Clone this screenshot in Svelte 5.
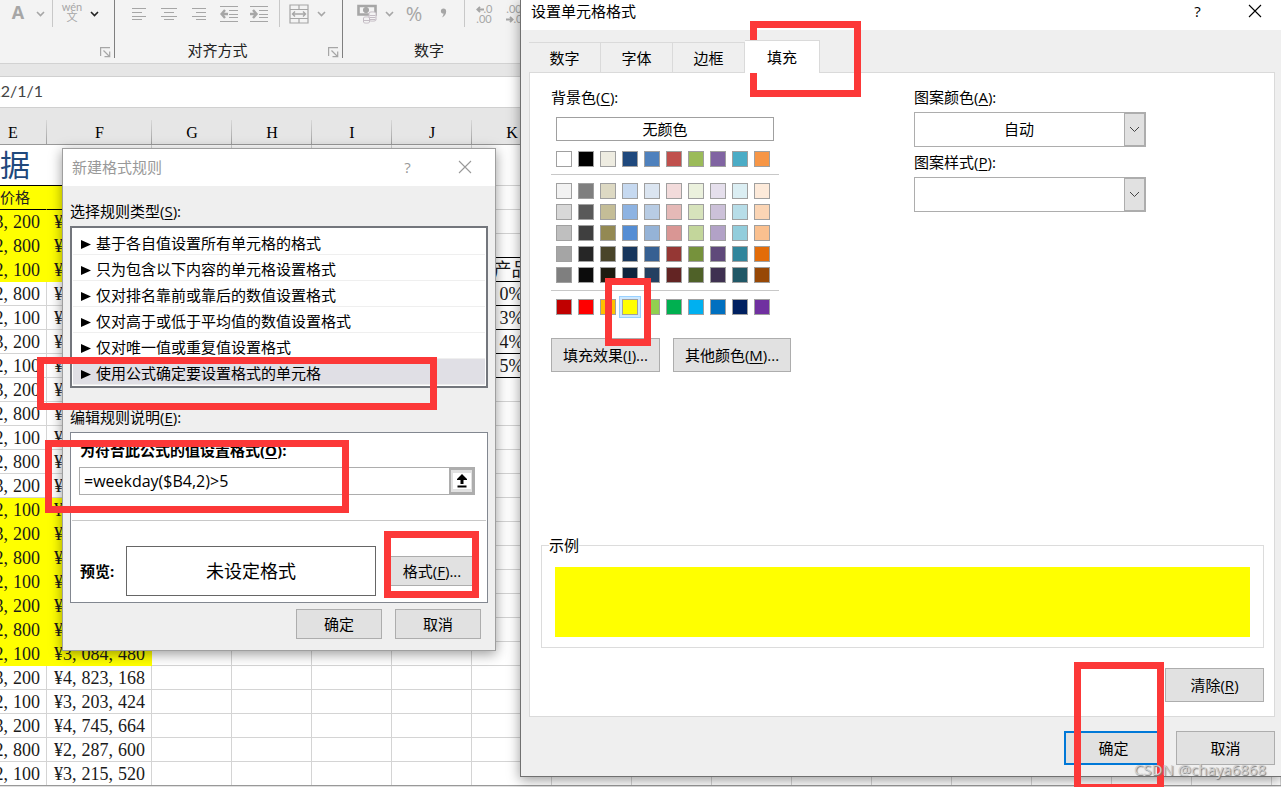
<script lang="ts">
	const columns = ['E', 'F', 'G', 'H', 'I', 'J', 'K', 'L', 'M', 'N', 'O', 'P', 'Q', 'R', 'S', 'T', 'U'];
	const restColumns = columns.slice(2);

	const prices = [
		'3,200', '2,800', '2,100', '2,800', '2,100', '3,200', '2,100', '3,200',
		'2,800', '2,100', '2,800', '3,200', '2,100', '3,200', '2,800', '2,100',
		'3,200', '2,800', '2,100', '3,200', '2,100', '3,200', '2,800', '2,100'
	];
	const totals: Record<number, string> = {
		18: '3,084,480',
		19: '4,823,168',
		20: '3,203,424',
		21: '4,745,664',
		22: '2,287,600',
		23: '3,215,520'
	};
	const discounts: Record<number, string> = { 2: '产品', 3: '0%', 4: '3%', 5: '4%', 6: '5%' };

	const rows = prices.map((price, i) => ({
		price,
		total: '¥' + (totals[i] ?? ''),
		weekend: i < 3 || (i >= 12 && i <= 18),
		discount: discounts[i] ?? ''
	}));

	// keeps the comma with the digits before it
	const groups = (value: string) => value.split(/(?<=,)/);

	const ruleTypes = [
		'基于各自值设置所有单元格的格式',
		'只为包含以下内容的单元格设置格式',
		'仅对排名靠前或靠后的数值设置格式',
		'仅对高于或低于平均值的数值设置格式',
		'仅对唯一值或重复值设置格式',
		'使用公式确定要设置格式的单元格'
	];
	let selectedRule = $state(5);
	let formula = $state('=weekday($B4,2)>5');

	const tabs = ['数字', '字体', '边框', '填充'];
	let activeTab = $state('填充');

	const themeColors = ['#ffffff', '#000000', '#eeece1', '#1f497d', '#4f81bd', '#c0504d', '#9bbb59', '#8064a2', '#4bacc6', '#f79646'];
	const tints = [
		'#f2f2f2', '#7f7f7f', '#ddd9c3', '#c6d9f0', '#dbe5f1', '#f2dbdb', '#ebf1dd', '#e5dfec', '#dbeef3', '#fdeada',
		'#d8d8d8', '#595959', '#c4bd97', '#8db3e2', '#b8cce4', '#e5b9b7', '#d7e3bc', '#ccc1d9', '#b7dde8', '#fbd5b5',
		'#bfbfbf', '#3f3f3f', '#938953', '#548dd4', '#95b3d7', '#d99694', '#c3d69b', '#b2a2c7', '#92cddc', '#fac08f',
		'#a5a5a5', '#262626', '#494429', '#17365d', '#366092', '#953734', '#76923c', '#5f497a', '#31859b', '#e36c09',
		'#7f7f7f', '#0c0c0c', '#1d1b10', '#0f243e', '#244061', '#632423', '#4f6128', '#3f3151', '#205867', '#974806'
	];
	const standardColors = ['#c00000', '#ff0000', '#ffc000', '#ffff00', '#92d050', '#00b050', '#00b0f0', '#0070c0', '#002060', '#7030a0'];
	let fill = $state('#ffff00');
</script>

{#snippet chevron()}
	<svg width="9" height="6" viewBox="0 0 9 6" fill="none" stroke="currentColor" stroke-width="1.6">
		<path d="M1 1l3.5 3.5L8 1" />
	</svg>
{/snippet}

{#snippet launcher()}
	<button class="launcher" aria-label="更多选项">
		<svg width="11" height="11" viewBox="0 0 11 11" fill="none" stroke="#a6a6a6" stroke-width="1.2">
			<path d="M.6 9V.6H10M3.500 3.500l6 6M9.700 4.500v5.200H4.500" />
		</svg>
	</button>
{/snippet}

{#snippet closeIcon()}
	<svg width="14" height="14" viewBox="0 0 14 14" fill="none" stroke="currentColor" stroke-width="1.1">
		<path d="M1 1l12 12M13 1L1 13" />
	</svg>
{/snippet}

{#snippet swatches(colors: string[])}
	<div class="swatches">
		{#each colors as color}
			<button
				class="swatch"
				class:selected={color === fill}
				style:background-color={color}
				aria-label={color}
				onclick={() => (fill = color)}
			></button>
		{/each}
	</div>
{/snippet}

<div class="desktop">
	<main class="workbook">
		<div class="ribbon">
			<section class="group font-group">
				<div class="tools">
					<button class="tool letter">A</button>
					<button class="more" aria-label="字体颜色">{@render chevron()}</button>
					<span class="separator"></span>
					<button class="tool phonetic"><span>wén</span><span>文</span></button>
					<button class="more enabled" aria-label="拼音">{@render chevron()}</button>
				</div>
				<div class="caption">{@render launcher()}</div>
			</section>

			<section class="group align-group">
				<div class="tools">
					<button class="tool" aria-label="左对齐">
						<svg width="16" height="12" viewBox="0 0 16 12" stroke="currentColor"><path d="M1 .5h14M1 4.500h10M1 8.500h14M1 11.500h10" /></svg>
					</button>
					<button class="tool" aria-label="居中">
						<svg width="16" height="12" viewBox="0 0 16 12" stroke="currentColor"><path d="M0 .5h16M3 4.500h10M0 8.500h16M3 11.500h10" /></svg>
					</button>
					<button class="tool" aria-label="右对齐">
						<svg width="16" height="12" viewBox="0 0 16 12" stroke="currentColor"><path d="M1 .5h14M5 4.500h10M1 8.500h14M5 11.500h10" /></svg>
					</button>
					<button class="tool" aria-label="减少缩进量">
						<svg width="18" height="16" viewBox="0 0 18 16" fill="none" stroke="currentColor">
							<path d="M0 .5h18M9 4.500h9M9 8.500h9M9 11.500h9M0 15.500h18" />
							<path d="M8 8H1.500M5 4L1.500 8 5 12" stroke-width="2.400" />
						</svg>
					</button>
					<button class="tool" aria-label="增加缩进量">
						<svg width="18" height="16" viewBox="0 0 18 16" fill="none" stroke="currentColor">
							<path d="M0 .5h18M9 4.500h9M9 8.500h9M9 11.500h9M0 15.500h18" />
							<path d="M0 8h6.500M3 4l3.500 4L3 12" stroke-width="2.400" />
						</svg>
					</button>
					<span class="separator"></span>
					<button class="tool" aria-label="合并后居中">
						<svg width="20" height="20" viewBox="0 0 20 20" fill="none" stroke="currentColor" stroke-width="1.2">
							<path d="M1 1h18v18H1zM1 5.500h18M1 14.500h18M10 1v4.500M10 14.500V19" />
							<path d="M3.500 10h13M6 7.500L3.500 10 6 12.500M14 7.500l2.500 2.500-2.500 2.500" stroke-width="1.4" />
						</svg>
					</button>
					<button class="more" aria-label="合并选项">{@render chevron()}</button>
				</div>
				<div class="caption"><span>对齐方式</span>{@render launcher()}</div>
			</section>

			<section class="group number-group">
				<div class="tools">
					<button class="tool" aria-label="会计数字格式">
						<svg width="20" height="20" viewBox="0 0 20 20" fill="none" stroke="currentColor">
							<path d="M1.500 2h17v8.500h-17z" stroke-width="2.600" />
							<circle cx="9" cy="6" r="2.600" fill="currentColor" />
							<path d="M12 9c0-1.500 7-1.500 7 0v7c0 1.500-7 1.500-7 0z" fill="#f3f3f3" stroke="#c4bcc4" />
							<path d="M12.500 11.500h6M12.500 13.500h6M12.500 15.500h6" stroke="#c4bcc4" />
							<path d="M6.500 14c0-1.500 6-1.500 6 0v4c0 1.500-6 1.500-6 0z" fill="#f3f3f3" stroke="#c4bcc4" />
							<path d="M7 16.500h5" stroke="#c4bcc4" />
						</svg>
					</button>
					<button class="more" aria-label="货币选项">{@render chevron()}</button>
					<button class="tool percent">%</button>
					<button class="tool" aria-label="千位分隔样式">
						<svg width="8" height="11" viewBox="0 0 8 11" fill="currentColor"><circle cx="3.500" cy="3" r="2.600" /><path d="M6.100 3c.2 3-1.500 5.500-4.300 6.500C3 8 3.600 6.500 3.500 5z" /></svg>
					</button>
					<span class="separator"></span>
					<button class="tool decimals">
						<span>
							<svg width="8" height="7" viewBox="0 0 8 7" fill="none" stroke="currentColor" stroke-width="1.8"><path d="M8 3.500H1.500M4 .8L1.300 3.500 4 6.200" /></svg>.0
						</span>
						<span>.00</span>
					</button>
					<button class="tool decimals">
						<span>.00</span>
						<span>
							<svg width="8" height="7" viewBox="0 0 8 7" fill="none" stroke="currentColor" stroke-width="1.8"><path d="M0 3.500h6.500M4 .8l2.700 2.700L4 6.200" /></svg>.0
						</span>
					</button>
				</div>
				<div class="caption"><span>数字</span></div>
			</section>
		</div>

		<div class="formula-bar"><div class="formula-value"><span>2022/1/1</span></div></div>

		<table class="sheet">
			<colgroup>
				<col class="col-price" />
				<col class="col-total" />
				{#each restColumns.slice(1) as _}
					<col class="col-plain" />
				{/each}
				<col />
			</colgroup>
			<thead>
				<tr>
					{#each columns as column}
						<th class:first={column === 'E'}>{column}</th>
					{/each}
				</tr>
			</thead>
			<tbody>
				<tr class="title-row">
					<td colspan="2">据</td>
					{#each restColumns as _}<td></td>{/each}
				</tr>
				<tr class="field-row">
					<td class="filled">价格</td>
					<td class="filled"></td>
					{#each restColumns as _}<td></td>{/each}
				</tr>
				{#each rows as row, i}
					<tr>
						<td class:weekend={row.weekend}>
							<div class="amount">{#each groups(row.price) as part}<span>{part}</span>{/each}</div>
						</td>
						<td class:weekend={row.weekend}>
							<div class="amount" class:start={row.total === '¥'}>{#each groups(row.total) as part}<span>{part}</span>{/each}</div>
						</td>
						{#each restColumns as column}
							{#if column === 'K'}
								<td class="discount" class:boxed={row.discount !== '' || i === 1}>{row.discount}</td>
							{:else}
								<td></td>
							{/if}
						{/each}
					</tr>
				{/each}
			</tbody>
		</table>
	</main>

	<div class="dialog rule-dialog" role="dialog" aria-labelledby="rule-title">
		<header>
			<h2 id="rule-title">新建格式规则</h2>
			<button class="caption-button">?</button>
			<button class="caption-button" aria-label="关闭">{@render closeIcon()}</button>
		</header>
		<div class="rule-body">
			<p class="label" id="rule-types">选择规则类型(<u>S</u>):</p>
			<ul class="rule-list" aria-labelledby="rule-types">
				{#each ruleTypes as rule, i}
					<li>
						<button class:selected={i === selectedRule} onclick={() => (selectedRule = i)}>
							<svg width="10" height="9" viewBox="0 0 10 9"><path d="M0 0l10 4.500L0 9z" /></svg>
							{rule}
						</button>
					</li>
				{/each}
			</ul>

			<p class="label second">编辑规则说明(<u>E</u>):</p>
			<div class="rule-editor">
				<label for="formula">为符合此公式的值设置格式(<u>O</u>):</label>
				<div class="formula-field">
					<input id="formula" type="text" bind:value={formula} />
					<button aria-label="选择区域">
						<svg width="18" height="16" viewBox="0 0 18 16"><path fill="#fff" d="M0 0h18v16H0z" /><path d="M9 1l5 5v1h-3.500v4h-3V7H4V6zM4.500 12.500h9v2h-9z" /></svg>
					</button>
				</div>
				<hr />
				<div class="preview">
					<strong>预览:</strong>
					<div class="preview-box">未设定格式</div>
					<button class="push">格式(<u>F</u>)...</button>
				</div>
			</div>
			<div class="rule-actions">
				<button class="push">确定</button>
				<button class="push">取消</button>
			</div>
		</div>
	</div>

	<div class="dialog cell-dialog" role="dialog" aria-labelledby="cell-title">
		<header>
			<h2 id="cell-title">设置单元格格式</h2>
			<button class="caption-button">?</button>
			<button class="caption-button" aria-label="关闭">{@render closeIcon()}</button>
		</header>
		<div class="cell-body">
			<nav class="tabs">
				{#each tabs as tab}
					<button class:active={tab === activeTab} onclick={() => (activeTab = tab)}>{tab}</button>
				{/each}
			</nav>
			<div class="panel">
				<div class="fill-options">
					<div class="background">
						<p class="label">背景色(<u>C</u>):</p>
						<div class="palette">
							<button class="no-color">无颜色</button>
							{@render swatches(themeColors)}
							<hr />
							{@render swatches(tints)}
							<hr />
							{@render swatches(standardColors)}
						</div>
						<div class="fill-buttons">
							<button class="push">填充效果(<u>I</u>)...</button>
							<button class="push">其他颜色(<u>M</u>)...</button>
						</div>
					</div>
					<div class="pattern">
						<label for="pattern-color">图案颜色(<u>A</u>):</label>
						<div class="select">
							<select id="pattern-color"><option>自动</option></select>
							<span class="arrow">
								<svg width="11" height="7" viewBox="0 0 11 7" fill="none" stroke="#444"><path d="M1 1l4.500 4.500L10 1" /></svg>
							</span>
						</div>
						<label for="pattern-style">图案样式(<u>P</u>):</label>
						<div class="select">
							<select id="pattern-style"><option></option></select>
							<span class="arrow">
								<svg width="11" height="7" viewBox="0 0 11 7" fill="none" stroke="#444"><path d="M1 1l4.500 4.500L10 1" /></svg>
							</span>
						</div>
					</div>
				</div>
				<fieldset>
					<legend>示例</legend>
					<div class="sample" style:background-color={fill}></div>
				</fieldset>
				<div class="clear-row">
					<button class="push">清除(<u>R</u>)</button>
				</div>
			</div>
			<div class="cell-actions">
				<button class="push default">确定</button>
				<button class="push">取消</button>
			</div>
		</div>
	</div>

	<span class="mark mark-rule"></span>
	<span class="mark mark-formula"></span>
	<span class="mark mark-format"></span>
	<span class="mark mark-tab"></span>
	<span class="mark mark-swatch"></span>
	<span class="mark mark-ok"></span>

	<span class="watermark">CSDN @chaya6868</span>
</div>

<style>
	:global(body) {
		margin: 0;
	}

	.desktop {
		--ui: 'Open Sans', 'Noto Sans CJK SC', sans-serif;
		--song: 'Liberation Serif', 'Noto Sans CJK SC', serif;
		position: relative;
		min-height: 100vh;
		overflow: hidden;
		background: #e0e0e0;
		font-family: var(--ui);
		font-size: 15px;
		line-height: 20px;
		color: #000;
	}

	.desktop * {
		box-sizing: border-box;
	}

	button,
	input,
	select {
		font: inherit;
		color: inherit;
		margin: 0;
		padding: 0;
	}

	button {
		background: none;
		border: none;
		white-space: nowrap;
	}

	p,
	h2,
	ul {
		margin: 0;
		padding: 0;
		font-size: inherit;
		font-weight: normal;
	}

	u {
		text-underline-offset: 2px;
	}

	/* ribbon */
	.ribbon {
		display: flex;
		height: 64px;
		background: #f3f3f3;
		border-bottom: 1px solid #d2d2d2;
	}

	.group {
		display: flex;
		flex-direction: column;
		height: 58px;
		border-right: 1px solid #7f7f7f;
	}

	.font-group {
		width: 115px;
	}

	.align-group {
		width: 228px;
	}

	.number-group {
		width: 194px;
		border-right: none;
	}

	.tools {
		display: flex;
		height: 27px;
		padding-left: 9px;
		color: #a6a6a6;
	}

	.font-group .tools {
		padding-left: 3px;
	}

	.tool,
	.more {
		display: flex;
		align-items: center;
		justify-content: center;
		width: 30px;
		flex: none;
	}

	.more {
		width: 14px;
	}

	.more.enabled {
		color: #222;
	}

	.separator {
		width: 1px;
		margin: 0 4px 0 5px;
		background: #c8c8c8;
	}

	.letter {
		font-weight: bold;
		font-size: 18px;
		padding-bottom: 4px;
	}

	.phonetic,
	.decimals {
		flex-direction: column;
		font-family: Lato, 'Noto Sans CJK SC', sans-serif;
		font-size: 11px;
		line-height: 10px;
	}

	.phonetic {
		padding-bottom: 3px;
	}

	.percent {
		font-size: 20px;
		margin-left: 3px;
	}

	.caption {
		flex: 1;
		display: flex;
		align-items: flex-end;
		justify-content: center;
		position: relative;
		padding-right: 22px;
		line-height: 16px;
		color: #222;
	}

	.launcher {
		position: absolute;
		right: 3px;
		bottom: 0;
		line-height: 0;
	}

	/* formula bar */
	.formula-bar {
		padding: 12px 0 0;
		background: #e6e6e6;
	}

	.formula-value {
		display: flex;
		height: 32px;
		align-items: center;
		background: #fff;
		border-top: 1px solid #d0d0d0;
		border-bottom: 1px solid #d0d0d0;
		font-family: Lato, sans-serif;
		font-size: 16px;
		color: #444;
	}

	.formula-value span {
		display: flex;
		justify-content: flex-end;
		width: 43px;
		padding-bottom: 2px;
	}

	/* sheet */
	.sheet {
		width: 100%;
		table-layout: fixed;
		border-spacing: 0;
		background: #fff;
		font-family: var(--song);
		font-size: 18px;
		line-height: 22px;
		border-bottom: 1px solid #999;
	}

	.col-price {
		width: 47px;
	}

	.col-total {
		width: 105px;
	}

	.col-plain {
		width: 80px;
	}

	th {
		height: 36px;
		padding: 14px 0 0;
		font-weight: normal;
		font-size: 16px;
		background: linear-gradient(#d8d8d8, #a0a0a0) right bottom / 1px 24px no-repeat #e6e6e6;
		border-bottom: 1px solid #999;
	}

	th.first {
		padding-right: 21px;
	}

	td {
		height: 24px;
		padding: 1px 0 0;
		border-right: 1px solid #d4d4d4;
		border-bottom: 1px solid #d4d4d4;
		overflow: hidden;
		white-space: nowrap;
		color: #1a1a1a;
	}

	tbody tr:last-child td {
		height: 23px;
		border-bottom: none;
	}

	td.weekend,
	td.filled {
		background: #ff0;
		border-color: #ff0;
	}

	.title-row td {
		height: 41px;
		font-size: 30px;
		line-height: 36px;
		color: #1f497d;
	}

	.title-row td:first-child,
	.field-row td.filled {
		border-bottom-color: #000;
	}

	.field-row td {
		font-size: 15px;
		color: #222;
	}

	.amount {
		display: flex;
		justify-content: flex-end;
		gap: 5px;
		padding-right: 6px;
	}

	.amount.start {
		justify-content: flex-start;
		padding-left: 7px;
	}

	.discount {
		text-align: center;
	}

	.discount.boxed {
		border-bottom-color: #000;
	}

	/* dialogs */
	.dialog {
		position: absolute;
		background: #efefef;
		border: 1px solid #9f9f9f;
		box-shadow: 0 3px 12px rgba(0, 0, 0, 0.4);
	}

	.dialog header {
		display: flex;
		align-items: center;
		gap: 4px;
		background: #fff;
	}

	.dialog h2 {
		flex: 1;
	}

	.caption-button {
		display: flex;
		align-items: center;
		justify-content: center;
		width: 53px;
		height: 22px;
	}

	.push {
		height: 30px;
		padding-bottom: 1px;
		background: #e1e1e1;
		border: 1px solid #adadad;
	}

	.label,
	label {
		display: block;
	}

	hr {
		height: 1px;
		margin: 0;
		border: none;
		background: #c8c8c8;
	}

	.rule-dialog {
		left: 62px;
		top: 148px;
		width: 434px;
	}

	.rule-dialog header {
		height: 37px;
		padding: 0 4px 2px 9px;
		color: #999;
	}

	.rule-body {
		padding: 15px 7px 11px;
	}

	.label.second {
		margin-top: 19px;
	}

	.rule-list {
		margin-top: 5px;
		padding: 1px;
		list-style: none;
		background: #fff;
		border: 2px solid #73767c;
	}

	.rule-list button {
		display: flex;
		align-items: center;
		gap: 5px;
		width: 100%;
		height: 26px;
		padding: 2px 8px 0;
		border-bottom: 1px solid #efefef;
	}

	.rule-list svg {
		margin-top: 3px;
	}

	.rule-list button.selected {
		background: #e0dfe5;
	}

	.rule-editor {
		margin-top: 5px;
		padding: 7px 1px 6px;
		background: #fff;
		border: 1px solid #828790;
	}

	.rule-editor label,
	.preview strong {
		font-weight: bold;
		padding-left: 8px;
	}

	.formula-field {
		display: flex;
		height: 28px;
		margin: 7px 11px 25px 7px;
		border: 1px solid #adadad;
	}

	.formula-field input {
		flex: 1;
		min-width: 0;
		padding: 0 4px;
		border: none;
		background: #fff;
		font-size: 16px;
	}

	.formula-field button {
		display: flex;
		align-items: center;
		justify-content: center;
		width: 25px;
		background: #e1e1e1;
		border: 2px solid #adadad;
	}

	.preview {
		display: flex;
		align-items: center;
		padding: 25px 11px 0 0;
	}

	.preview strong {
		width: 54px;
	}

	.preview-box {
		flex: 1;
		display: flex;
		align-items: center;
		justify-content: center;
		height: 50px;
		border: 1px solid #666;
		font-size: 18px;
	}

	.preview .push {
		width: 86px;
		margin-left: 13px;
	}

	.rule-actions {
		display: flex;
		justify-content: flex-end;
		gap: 13px;
		padding: 6px 7px 0 0;
	}

	.rule-actions .push {
		width: 86px;
	}

	.cell-dialog {
		left: 520px;
		right: 0;
		top: 0;
		border-color: #707070;
		border-top: none;
		border-right: none;
	}

	.cell-dialog header {
		height: 30px;
		padding: 0 0 8px 10px;
	}

	.cell-body {
		padding: 10px 6px 11px 8px;
	}

	.tabs {
		display: flex;
		align-items: flex-end;
	}

	.tabs button {
		width: 72px;
		height: 30px;
		border-top: 1px solid #dadada;
		border-right: 1px solid #dadada;
	}

	.tabs button.active {
		width: 75px;
		height: 33px;
		margin-bottom: -1px;
		padding-bottom: 1px;
		background: #fff;
		z-index: 1;
	}

	.panel {
		padding: 14px 10px 14px 11px;
		background: #fff;
		border: 1px solid #dadada;
	}

	.fill-options {
		display: grid;
		grid-template-columns: 363px 1fr;
		padding-left: 10px;
	}

	.palette {
		width: 228px;
		margin-top: 10px;
	}

	.no-color {
		display: block;
		width: 218px;
		height: 24px;
		margin: 0 5px 10px;
		line-height: 22px;
		border: 1px solid #a0a0a0;
	}

	.palette hr {
		margin: 7px 0 8px;
	}

	.swatches {
		display: grid;
		grid-template-columns: repeat(10, 16px);
		gap: 5px 6px;
		padding-left: 5px;
	}

	.swatch {
		height: 16px;
		border: 1px solid #a0a0a0;
	}

	.swatch.selected {
		box-shadow:
			0 0 0 2px #cde8ff,
			0 0 0 3px #99d1ff;
	}

	.fill-buttons {
		display: flex;
		gap: 13px;
		margin-top: 23px;
	}

	.cell-body .push {
		height: 34px;
	}

	.fill-buttons .push {
		padding: 0 11px 1px;
	}

	.select {
		display: grid;
		width: 232px;
		height: 35px;
		margin: 5px 0;
	}

	.select select,
	.arrow {
		grid-area: 1 / 1;
	}

	.select select {
		appearance: none;
		padding: 0 22px 2px 0;
		text-align-last: center;
		background: #fff;
		border: 1px solid #adadad;
		border-radius: 0;
	}

	.arrow {
		display: flex;
		align-items: center;
		justify-content: center;
		justify-self: end;
		width: 22px;
		background: #e1e1e1;
		border: 2px solid #adadad;
		border-left-width: 1px;
		pointer-events: none;
	}

	fieldset {
		margin: 163px 0 0;
		padding: 12px 13px 10px;
		border: 1px solid #dcdcdc;
	}

	legend {
		margin-left: -6px;
		padding: 0;
	}

	.sample {
		height: 70px;
	}

	.clear-row {
		display: flex;
		justify-content: flex-end;
		margin-top: 20px;
	}

	.clear-row .push,
	.cell-actions .push {
		width: 99px;
	}

	.cell-actions {
		display: flex;
		justify-content: flex-end;
		gap: 13px;
		margin-top: 14px;
	}

	.push.default {
		border: 2px solid #0078d7;
	}

	/* highlight frames drawn over the windows */
	.mark {
		position: absolute;
		border: 7px solid #fc3838;
		pointer-events: none;
	}

	.mark-rule {
		left: 37px;
		top: 357px;
		width: 400px;
		height: 53px;
	}

	.mark-formula {
		left: 45px;
		top: 440px;
		width: 304px;
		height: 73px;
	}

	.mark-format {
		left: 384px;
		top: 531px;
		width: 95px;
		height: 67px;
	}

	.mark-tab {
		left: 750px;
		top: 21px;
		width: 111px;
		height: 76px;
	}

	.mark-swatch {
		left: 605px;
		top: 278px;
		width: 46px;
		height: 68px;
	}

	.mark-ok {
		right: 117px;
		top: 662px;
		width: 90px;
		height: 129px;
	}

	.watermark {
		position: absolute;
		right: 15px;
		top: 759px;
		color: #d0d0d0;
		text-shadow: 1px 1px 1px #777;
	}
</style>
